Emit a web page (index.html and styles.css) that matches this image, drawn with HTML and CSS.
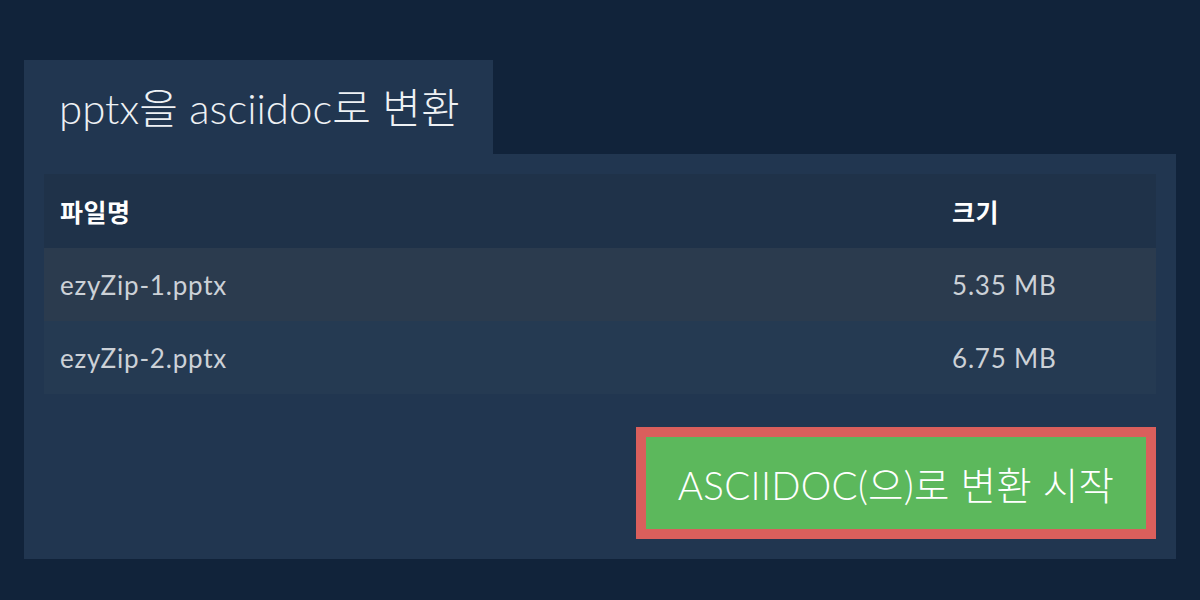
FILE: index.html
```html
<!DOCTYPE html>
<html lang="ko">
<head>
<meta charset="utf-8">
<link rel="stylesheet" href="styles.css">
</head>
<body>
<div class="wrap">
  <div class="tab"><h1 class="title">pptx을 asciidoc로 변환</h1></div>
  <div class="panel">
    <table class="files">
      <thead>
        <tr><th class="c-name">파일명</th><th class="c-size">크기</th></tr>
      </thead>
      <tbody>
        <tr class="odd"><td>ezyZip-1.pptx</td><td>5.35 MB</td></tr>
        <tr class="even"><td>ezyZip-2.pptx</td><td>6.75 MB</td></tr>
      </tbody>
    </table>
    <div class="actions">
      <button class="start">ASCIIDOC(으)로 변환 시작</button>
    </div>
  </div>
</div>
</body>
</html>
```

FILE: styles.css
```css
html, body {
  margin: 0;
  padding: 0;
  background: #11233a;
  font-family: Lato, "Noto Sans CJK KR", sans-serif;
}
.wrap {
  padding: 60px 24px 0 24px;
  width: 1152px;
}
.tab {
  width: 469px;
  height: 94px;
  background: #213650;
  display: flex;
  align-items: center;
  box-sizing: border-box;
  padding: 0 0 4px 35px;
}
.title {
  margin: 0;
  font-weight: 300;
  font-size: 42px;
  color: #eef1f4;
}
.panel {
  background: #213650;
  padding: 20px;
  display: flex;
  flex-direction: column;
}
.files {
  width: 100%;
  border-collapse: collapse;
}
.files th {
  text-align: left;
  color: #ffffff;
  font-weight: 700;
  font-size: 25px;
  letter-spacing: 0.5px;
  height: 74px;
  padding: 0 16px;
  background: #1f3249;
}
.files td {
  color: #ccd1d7;
  font-size: 26px;
  letter-spacing: 0.8px;
  height: 73px;
  padding: 0 16px;
}
.files .c-size { width: 188px; }
.odd { background: #2b3b4e; }
.even { background: #253a52; }
.actions {
  display: flex;
  justify-content: flex-end;
  padding-top: 33px;
}
.start {
  width: 520px;
  height: 112px;
  background: #5cb85c;
  border: 10px solid #da5f5c;
  color: #ffffff;
  font-family: Lato, "Noto Sans CJK KR", sans-serif;
  font-weight: 300;
  font-size: 38.5px;
  letter-spacing: 0.3px;
  padding: 0;
  cursor: pointer;
}
```
